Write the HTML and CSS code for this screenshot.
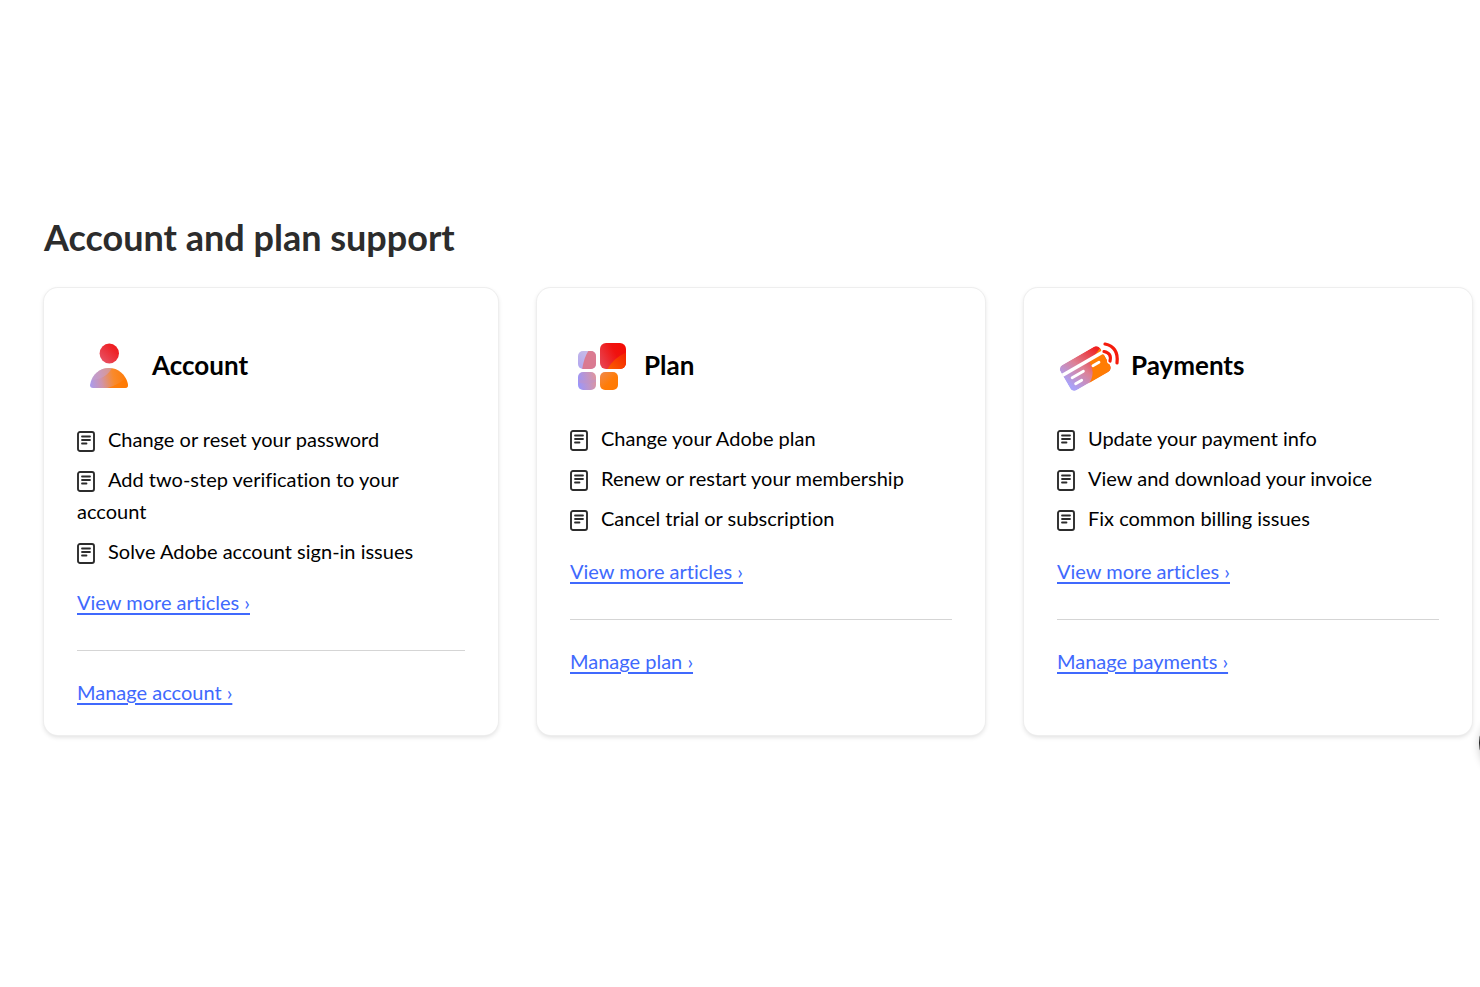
FILE: index.html
```html
<!DOCTYPE html>
<html lang="en">
<head>
<meta charset="utf-8">
<title>Account and plan support</title>
<link rel="stylesheet" href="styles.css">
</head>
<body>
<svg class="defs" width="0" height="0" aria-hidden="true">
  <defs>
    <symbol id="article" viewBox="0 0 18 21">
      <rect x="1" y="1" width="16" height="19" rx="2" fill="none" stroke="#2c2c2c" stroke-width="1.9"/>
      <path d="M5 5.500h8M5 9h8M5 12.500h4.500" fill="none" stroke="#2c2c2c" stroke-width="1.800" stroke-linecap="round"/>
    </symbol>
    <linearGradient id="red" x1="0" y1="1" x2="1" y2="0"><stop offset="0" stop-color="#e55b70"/><stop offset=".7" stop-color="#ee2329"/><stop offset="1" stop-color="#f01414"/></linearGradient>
    <linearGradient id="body" x1="0" y1=".6" x2="1" y2=".5"><stop offset="0" stop-color="#a99cf0"/><stop offset=".3" stop-color="#cf94ac"/><stop offset=".62" stop-color="#f98a2c"/><stop offset="1" stop-color="#ff7900"/></linearGradient>
    <linearGradient id="card" x1="0" y1=".6" x2="1" y2=".35"><stop offset="0" stop-color="#aaa2f8"/><stop offset=".45" stop-color="#dd8094"/><stop offset="1" stop-color="#f02020"/></linearGradient>
    <linearGradient id="orange" x1="0" y1="0" x2="1" y2="1"><stop offset="0" stop-color="#ef8a50"/><stop offset=".55" stop-color="#ff7c08"/><stop offset="1" stop-color="#ff7900"/></linearGradient>
    <linearGradient id="violet" x1="0" y1=".6" x2="1" y2=".4"><stop offset="0" stop-color="#9b96fa"/><stop offset="1" stop-color="#dd95a0"/></linearGradient>
    <linearGradient id="lilac" x1="0" y1="1" x2="1" y2="0"><stop offset="0" stop-color="#b0a5f0"/><stop offset="1" stop-color="#d0c4e4"/></linearGradient>
    <linearGradient id="square" x1="0" y1=".7" x2="1" y2=".2"><stop offset="0" stop-color="#e8414d"/><stop offset=".6" stop-color="#f0120f"/><stop offset="1" stop-color="#f40c04"/></linearGradient>
    <linearGradient id="glow" x1="0" y1="1" x2="1" y2="0"><stop offset="0" stop-color="#fb6200"/><stop offset="1" stop-color="#f31c00"/></linearGradient>
    <clipPath id="clip-body"><path d="M13 58C15 47 23 41 32 41S49 47 51 58Q51 61 48 61H16Q13 61 13 58Z"/></clipPath>
    <clipPath id="clip-violet"><rect x="9" y="24" width="18" height="18" rx="5"/></clipPath>
    <clipPath id="clip-square"><rect x="31" y="16" width="26" height="26" rx="6"/></clipPath>
    <clipPath id="clip-card"><rect x="-23" y="-14" width="46" height="29" rx="5"/></clipPath>
  </defs>
</svg>

<main class="support">
  <h1 class="support-title">Account and plan support</h1>
  <div class="cards">
    <section class="card card-account">
      <header class="card-head">
        <svg class="card-icon" viewBox="0 0 75 76" aria-hidden="true">
          <ellipse cx="32.300" cy="26.500" rx="9.700" ry="10" fill="url(#red)"/>
          <g clip-path="url(#clip-body)">
            <path d="M12 40h40v22H12z" fill="url(#body)"/>
            <path d="M11 53Q29 54 36 39H11Z" fill="#c6a0cb" opacity=".55"/>
            <path d="M27 62Q46 57 53 46V62Z" fill="#ff7900" opacity=".7"/>
          </g>
        </svg>
        <h2 class="card-title">Account</h2>
      </header>
      <ul class="articles">
        <li><svg class="article-icon" aria-hidden="true"><use href="#article"/></svg>Change or reset your password</li>
        <li><svg class="article-icon" aria-hidden="true"><use href="#article"/></svg>Add two-step verification to your account</li>
        <li><svg class="article-icon" aria-hidden="true"><use href="#article"/></svg>Solve Adobe account sign-in issues</li>
      </ul>
      <a class="link" href="#">View more articles ›</a>
      <hr class="rule">
      <a class="link" href="#">Manage account ›</a>
    </section>

    <section class="card">
      <header class="card-head">
        <svg class="card-icon" viewBox="0 0 75 76" aria-hidden="true">
          <g clip-path="url(#clip-violet)">
            <rect x="9" y="24" width="18" height="18" fill="url(#lilac)"/>
            <path d="M13 43Q15 30 20 23H29V43Z" fill="#dd7387" opacity=".9"/>
          </g>
          <g clip-path="url(#clip-square)">
            <rect x="31" y="16" width="26" height="26" fill="url(#square)"/>
            <path d="M38 43Q44 31 58 25V43Z" fill="url(#glow)"/>
          </g>
          <rect x="9" y="45" width="18" height="18" rx="5" fill="url(#violet)"/>
          <path d="M10 52q8 3 17 0v3q-7 2-17 1z" fill="#c093c6" opacity=".45"/>
          <rect x="31" y="45" width="18" height="18" rx="5" fill="url(#orange)"/>
        </svg>
        <h2 class="card-title">Plan</h2>
      </header>
      <ul class="articles">
        <li><svg class="article-icon" aria-hidden="true"><use href="#article"/></svg>Change your Adobe plan</li>
        <li><svg class="article-icon" aria-hidden="true"><use href="#article"/></svg>Renew or restart your membership</li>
        <li><svg class="article-icon" aria-hidden="true"><use href="#article"/></svg>Cancel trial or subscription</li>
      </ul>
      <a class="link" href="#">View more articles ›</a>
      <hr class="rule">
      <a class="link" href="#">Manage plan ›</a>
    </section>

    <section class="card">
      <header class="card-head">
        <svg class="card-icon" viewBox="0 0 75 76" aria-hidden="true">
          <g transform="translate(29 41) rotate(-30)">
            <g clip-path="url(#clip-card)">
              <rect x="-23" y="-14" width="46" height="29" fill="url(#card)"/>
              <path d="M-8 17Q7 12 7-3L26-11V17Z" fill="#ff7c04"/>
              <path d="M-25-5H25" stroke="#fff" stroke-width="3.500"/>
            </g>
            <path d="M-16 2H-3M8 2H15M-16 9H-9" stroke="#fff" stroke-width="2.800" stroke-linecap="round"/>
          </g>
          <path d="M48 24.500Q56 26 54 34M49 17Q63 20 61 36" fill="none" stroke="#fff" stroke-width="6" stroke-linecap="round"/>
          <path d="M48 24.500Q56 26 54 34M49 17Q63 20 61 36" fill="none" stroke="#f51b0b" stroke-width="3.200" stroke-linecap="round"/>
        </svg>
        <h2 class="card-title">Payments</h2>
      </header>
      <ul class="articles">
        <li><svg class="article-icon" aria-hidden="true"><use href="#article"/></svg>Update your payment info</li>
        <li><svg class="article-icon" aria-hidden="true"><use href="#article"/></svg>View and download your invoice</li>
        <li><svg class="article-icon" aria-hidden="true"><use href="#article"/></svg>Fix common billing issues</li>
      </ul>
      <a class="link" href="#">View more articles ›</a>
      <hr class="rule">
      <a class="link" href="#">Manage payments ›</a>
    </section>
  </div>
</main>
<button class="chat" type="button" aria-label="Chat"></button>
</body>
</html>
```
FILE: styles.css
```css
* { box-sizing: border-box; }

body {
  min-height: 100vh;
  margin: 0;
  background: #fff;
  color: #000;
  font-family: Lato, "Noto Sans", sans-serif;
  font-size: 20px;
  font-variant-ligatures: none;
  line-height: 32px;
}

.defs { position: absolute; }

.support { padding: 213px 8px 0 44px; }

.support-title {
  margin: 0 0 27px;
  color: #2c2c2c;
  font-size: 36px;
  font-weight: 700;
  line-height: 48px;
}

.cards {
  display: grid;
  grid-template-columns: 454fr 448fr 448fr;
  gap: 39px;
}

.card {
  padding: 39px 33px 27px;
  border-radius: 14px;
  background: #fff;
  box-shadow: 0 0 0 1px #eee, 0 2px 5px rgba(0, 0, 0, 0.14);
}

.card-head {
  display: flex;
  align-items: center;
  margin-bottom: 19px;
}

.card-icon {
  flex: none;
  width: 75px;
  height: 76px;
  margin-left: -1px;
}

.card-account .card-icon { margin-left: 0; }

.card-title {
  margin: 0;
  font-size: 26px;
  font-weight: 700;
  line-height: 32px;
}

.articles {
  display: flex;
  flex-direction: column;
  gap: 8px;
  margin: 0 0 21px;
  padding: 0;
  list-style: none;
}

.card-account .card-head { margin-bottom: 20px; }
.card-account .articles { margin-bottom: 19px; }

.article-icon {
  width: 18px;
  height: 21px;
  margin-right: 13px;
  vertical-align: -5px;
}

.link {
  color: #4069fd;
  text-decoration: underline;
  text-decoration-thickness: 2px;
  text-underline-offset: 3px;
}

.rule {
  height: 1px;
  margin: 32px 0 25px;
  border: 0;
  background: #d5d5d5;
}

.chat {
  position: fixed;
  top: 711px;
  right: -63px;
  width: 64px;
  height: 64px;
  padding: 0;
  border: 0;
  border-radius: 50%;
  background: #222;
  box-shadow: 0 2px 8px rgba(0, 0, 0, 0.2);
}
```
